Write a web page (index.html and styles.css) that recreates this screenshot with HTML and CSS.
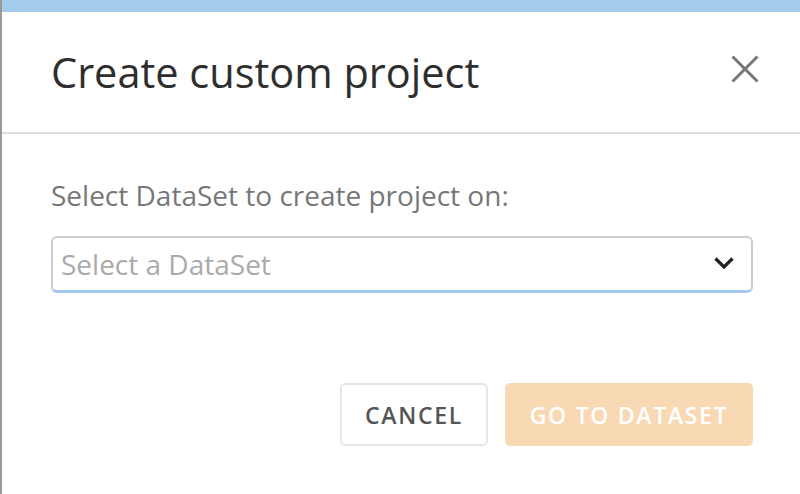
FILE: index.html
```html
<!DOCTYPE html>
<html lang="en">
<head>
<meta charset="utf-8">
<title>Create custom project</title>
<link rel="stylesheet" href="styles.css">
</head>
<body>
<div class="page">
  <div class="edge"></div>
  <div class="modal">
    <div class="topbar"></div>
    <div class="header">
      <h1 class="title">Create custom project</h1>
      <button class="close" aria-label="Close">
        <svg width="28" height="28" viewBox="0 0 28 28"><path d="M1.5 1.5 L26.5 26.5 M26.5 1.5 L1.5 26.5" stroke="#777" stroke-width="3" fill="none"/></svg>
      </button>
    </div>
    <div class="body">
      <label class="label">Select DataSet to create project on:</label>
      <div class="select">
        <span class="placeholder">Select a DataSet</span>
        <svg class="chevron" width="20" height="12" viewBox="0 0 20 12"><path d="M1.5 1.5 L10 10 L18.5 1.5" stroke="#222" stroke-width="3.2" fill="none"/></svg>
      </div>
      <div class="actions">
        <button class="btn btn-cancel">CANCEL</button>
        <button class="btn btn-go">GO TO DATASET</button>
      </div>
    </div>
  </div>
</div>
</body>
</html>
```

FILE: styles.css
```css
* { box-sizing: border-box; }
html, body { margin: 0; padding: 0; }
body {
  font-family: "Open Sans", "Liberation Sans", sans-serif;
  background: #fff;
  width: 800px;
  height: 494px;
  overflow: hidden;
}
.page { display: flex; height: 494px; }
.edge { width: 2px; background: #9a9a9a; flex: none; }
.modal { flex: 1; background: #fff; display: flex; flex-direction: column; }
.topbar { height: 12px; background: #a5cbec; }
.header {
  height: 122px;
  border-bottom: 2px solid #dddddd;
  display: flex;
  align-items: center;
  justify-content: space-between;
  padding: 0 41px 0 49px;
}
.title {
  margin: 0;
  font-size: 41.5px;
  font-weight: 500;
  color: #2e2e2e;
  line-height: 1;
  position: relative;
  top: 1px;
}
.close {
  border: 0;
  background: none;
  padding: 0;
  width: 28px;
  height: 28px;
  display: flex;
  position: relative;
  top: -3px;
}
.body { padding: 43px 47px 0 49px; display: flex; flex-direction: column; }
.label {
  font-size: 28px;
  line-height: 36px;
  color: #777;
}
.select {
  margin-top: 23px;
  height: 57px;
  border: 2px solid #cccccc;
  border-bottom: 3px solid #a5cbec;
  border-radius: 6px;
  display: flex;
  align-items: center;
  justify-content: space-between;
  padding: 0 17px 0 8px;
}
.placeholder { font-size: 28px; color: #aaa; line-height: 36px; }
.chevron { flex: none; margin-top: -2px; }
.actions {
  margin-top: 90px;
  display: flex;
  justify-content: flex-end;
  gap: 17px;
}
.btn {
  height: 63px;
  border-radius: 5px;
  font-family: "Open Sans", "Liberation Sans", sans-serif;
  font-size: 23px;
  font-weight: 600;
  letter-spacing: 1.7px;
  padding: 0;
  text-align: center;
}
.btn-cancel {
  width: 148px;
  background: #fff;
  border: 2px solid #e6e6e6;
  color: #555;
}
.btn-go {
  width: 248px;
  background: #f9d9b3;
  border: 0;
  color: #fff;
}
```
